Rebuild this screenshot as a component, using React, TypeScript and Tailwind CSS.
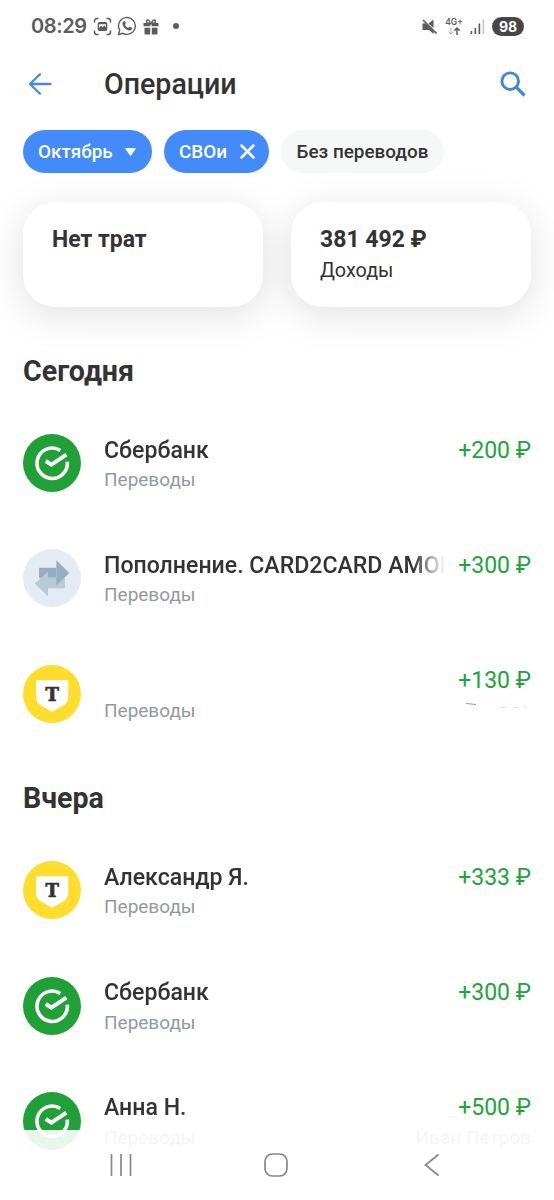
import React from 'react';

type Logo = 'sber' | 'transfer' | 'tbank';

interface Operation {
  id: number;
  logo: Logo;
  title: string;
  category: string;
  amount: string;
  note?: string;
}

const today: Operation[] = [
  { id: 1, logo: 'sber', title: 'Сбербанк', category: 'Переводы', amount: '+200 ₽' },
  { id: 2, logo: 'transfer', title: 'Пополнение. CARD2CARD AMOB', category: 'Переводы', amount: '+300 ₽' },
  { id: 3, logo: 'tbank', title: '', category: 'Переводы', amount: '+130 ₽' },
];

const yesterday: Operation[] = [
  { id: 4, logo: 'tbank', title: 'Александр Я.', category: 'Переводы', amount: '+333 ₽' },
  { id: 5, logo: 'sber', title: 'Сбербанк', category: 'Переводы', amount: '+300 ₽' },
  { id: 6, logo: 'sber', title: 'Анна Н.', category: 'Переводы', amount: '+500 ₽', note: 'Иван Петров' },
];

const StatusBar: React.FC = () => (
  <div className="flex h-[52px] items-center justify-between pl-[31px] pr-[30px] text-[#5c5c5c]">
    <div className="flex items-center">
      <span className="w-[56px] whitespace-nowrap font-['Inter',sans-serif] text-[20px] font-semibold leading-[24px] tracking-[-0.4px]">08:29</span>
      <svg className="ml-[6px] h-[19px] w-[19px]" viewBox="0 0 19 19" fill="none" stroke="currentColor" strokeWidth="1.5">
        <path d="M1.5 5.5V4a2.5 2.5 0 0 1 2.5-2.5h1.5M13.5 1.5H15A2.5 2.5 0 0 1 17.5 4v1.5M17.5 13.5V15a2.5 2.5 0 0 1-2.5 2.5h-1.5M5.5 17.5H4A2.5 2.5 0 0 1 1.5 15v-1.5" />
        <path fill="currentColor" fillRule="evenodd" stroke="none" d="M6.5 5h6a1.8 1.8 0 0 1 1.8 1.8v5.4a1.8 1.8 0 0 1-1.8 1.8h-6a1.8 1.8 0 0 1-1.8-1.8V6.8A1.8 1.8 0 0 1 6.5 5ZM6 11l2-2.2 1.6 1.4L11.3 8.5l1.7 1.7V7.3H6Z" />
      </svg>
      <svg className="ml-[5px] h-[20px] w-[20px]" viewBox="0 0 20 20" fill="none" stroke="currentColor" strokeWidth="1.4" strokeLinejoin="round">
        <path d="M1.5 18.5 2.7 14.2a8.4 8.4 0 1 1 3.2 3.1Z" />
        <path fill="currentColor" stroke="none" d="M6.7 5.2c.5-.4 1-.3 1.2.2l.8 1.8c.1.3 0 .6-.2.8l-.6.8c.8 1.5 1.8 2.5 3.4 3.2l.9-1c.2-.2.5-.3.8-.2l1.8.9c.4.2.4.4.3.8-.3 1.5-1.7 2.2-3 1.9-3.3-.7-6.1-3.5-6.6-6.5-.1-1.1.4-2 1.2-2.7Z" />
      </svg>
      <svg className="ml-[6px] h-[17px] w-[16px]" viewBox="0 0 16 17" fill="currentColor">
        <path d="M.5 5h2.8C2 3.2 3.4.7 5.5 1.5 6.9 2 7.5 3.5 8 4.7 8.5 3.5 9.1 2 10.5 1.5c2.1-.8 3.5 1.7 2.2 3.5h2.8v3.3H8.8L8 5.5l-.8 2.8H.5ZM1.5 9.7h5.7v6.8H2.5a1 1 0 0 1-1-1ZM8.8 9.7h5.7v5.8a1 1 0 0 1-1 1H8.8Z" />
        <path fill="#fff" d="M4.5 2.7c.9-.2 1.6.9 2 1.9H5.3c-1-.2-1.4-1.5-.8-1.9ZM11.5 2.7c-.9-.2-1.6.9-2 1.9h1.2c1-.2 1.4-1.5.8-1.9Z" />
      </svg>
      <span className="ml-[14px] h-[6px] w-[6px] rounded-full bg-[#5c5c5c]" />
    </div>

    <div className="flex items-center">
      <svg className="h-[17px] w-[17px]" viewBox="0 0 17 17" fill="currentColor">
        <path d="M2.5 5.5H6L13.5 13V16L9 12H2.5ZM8.5 5.5l5-4V10Z" />
        <path d="m3 2 13.5 13.5" fill="none" stroke="currentColor" strokeWidth="1.7" />
      </svg>
      <div className="ml-[7px] flex w-[20px] flex-col items-center">
        <span className="font-['Inter',sans-serif] text-[8.5px] font-semibold leading-[9px]">4G+</span>
        <svg className="h-[8px] w-[12px]" viewBox="0 0 12 8" fill="none" stroke="currentColor">
          <path d="M3 .5V7M.5 4.5 3 7l2.5-2.5" opacity=".45" />
          <path d="M9 8V1M6.3 3.7 9 1l2.7 2.7" strokeWidth="1.5" />
        </svg>
      </div>
      <svg className="ml-[6px] h-[15px] w-[15px]" viewBox="0 0 15 15" fill="currentColor">
        <path d="M.5 12h1.7v3H.5ZM4.5 9h1.7v6H4.5ZM8.5 4.5h1.7V15H8.5Z" />
        <path d="M12.5.5h1.7V15h-1.7Z" opacity=".35" />
      </svg>
      <span className="ml-[7px] flex h-[19px] w-[32px] items-center justify-center rounded-full bg-[#464646] font-['Inter',sans-serif] text-[14px] font-bold leading-[19px] text-white">98</span>
    </div>
  </div>
);

const OperationLogo: React.FC<{ logo: Logo }> = ({ logo }) => {
  if (logo === 'sber') {
    return (
      <svg className="h-[58px] w-[58px] shrink-0" viewBox="0 0 58 58" fill="none">
        <circle cx="29" cy="29" r="29" fill="#21a038" />
        <path d="M37.3 16.4A15.2 15.2 0 1 0 44.3 27.6" stroke="#fff" strokeWidth="3.6" />
        <path d="m22.7 27 5.7 3.7L43.4 20.6" stroke="#fff" strokeWidth="3.9" />
      </svg>
    );
  }
  if (logo === 'transfer') {
    return (
      <svg className="h-[58px] w-[58px] shrink-0" viewBox="0 0 58 58">
        <circle cx="29" cy="29" r="29" fill="#e5ebf5" />
        <path d="M16 18.8h17.3v10H16Z" fill="#95afc0" />
        <path d="M42 39.2H25v8L11.7 34.5 25 22.8v6h17Z" fill="#b8cad6" />
        <path d="M33.3 11.2 46.3 24l-13 12.2Z" fill="#95afc0" />
      </svg>
    );
  }
  return (
    <svg className="h-[58px] w-[58px] shrink-0" viewBox="0 0 58 58">
      <circle cx="29" cy="29" r="29" fill="#ffdd2d" />
      <path d="M13 15.3h32.3v16c0 4.8-2.3 7.8-6.3 10L29.2 46.7l-9.9-5.4c-4-2.2-6.3-5.2-6.3-10Z" fill="#fff" />
      <text x="29.2" y="36.2" textAnchor="middle" fontFamily="DejaVu Serif, serif" fontWeight="700" fontSize="18" fill="#333" stroke="#333" strokeWidth=".7">T</text>
    </svg>
  );
};

const OperationRow: React.FC<{ operation: Operation }> = ({ operation }) => (
  <li className="flex h-[58px] items-start">
    <OperationLogo logo={operation.logo} />
    <div className="ml-[23px] min-w-0 flex-1 pt-[1.5px]">
      <div className="h-[30px] overflow-hidden whitespace-nowrap text-[23.1px] font-medium leading-[30px] text-[#333] [mask-image:linear-gradient(to_right,black_calc(100%-32px),transparent)]">
        {operation.title}
      </div>
      <div className="mt-[1.5px] text-[19px] leading-[26px] text-[#9299a2]">{operation.category}</div>
    </div>
    <div className="ml-[8px] flex w-[78px] flex-col items-end whitespace-nowrap pt-[1.5px]">
      <span className="text-[23px] leading-[30px] text-[#20a53a]">{operation.amount}</span>
      {operation.note && <span className="mt-[1.5px] text-[19px] leading-[26px] text-[#9299a2]">{operation.note}</span>}
      {/* leftovers of the hidden sender name */}
      {!operation.title && (
        <svg className="mr-[3px] mt-[3.5px] h-[8px] w-[62px]" viewBox="0 0 62 8" fill="none" stroke="#999">
          <path d="M0 3.5 10 4.5" />
          <path d="M35 7.5h5M48 7.5h4M58 7h3" opacity=".3" />
        </svg>
      )}
    </div>
  </li>
);

const OperationGroup: React.FC<{ label: string; operations: Operation[] }> = ({ label, operations }) => (
  <section>
    <h2 className="h-[36px] text-[28.6px] font-bold leading-[36px] text-[#333]">{label}</h2>
    <ul className="mt-[45px] flex flex-col gap-[57.4px]">
      {operations.map((operation) => (
        <OperationRow key={operation.id} operation={operation} />
      ))}
    </ul>
  </section>
);

const App: React.FC = () => {
  return (
    <div className="relative h-[1200px] w-[554px] overflow-hidden bg-white font-['Roboto',sans-serif] text-[#333]">
      <StatusBar />

      <header className="flex h-[64px] items-center pl-[28px] pr-[28px]">
        <svg className="h-[24px] w-[24px]" viewBox="0 0 24 24" fill="none" stroke="#4689e3" strokeWidth="2.3" strokeLinecap="round" strokeLinejoin="round">
          <path d="M22.5 12H2M12 2.2 2 12l10 9.8" />
        </svg>
        <h1 className="ml-[52px] flex-1 text-[28.6px] font-medium leading-[36px]">Операции</h1>
        <svg className="h-[26px] w-[26px]" viewBox="0 0 26 26" fill="none" stroke="#4585d8" strokeWidth="2.9">
          <circle cx="10.2" cy="10.2" r="8.3" />
          <path d="m16.2 16.2 8.3 8.3" strokeWidth="3.2" />
        </svg>
      </header>

      {/* Filters */}
      <div className="mt-[14px] flex h-[43px] pl-[23px] text-[18.9px] font-medium leading-[43px]">
        <button className="flex w-[129px] items-center whitespace-nowrap rounded-full bg-[#428bf9] pl-[15px] text-white">
          <span className="w-[87px] text-left">Октябрь</span>
          <svg className="h-[8px] w-[11px]" viewBox="0 0 11 8" fill="#fff">
            <path d="M1 0h9q1.3 0 .6 1L6.2 7.3q-.7.9-1.4 0L.4 1Q-.3 0 1 0Z" />
          </svg>
        </button>
        <button className="ml-[12px] flex w-[105px] items-center whitespace-nowrap rounded-full bg-[#428bf9] pl-[15px] text-white">
          <span className="w-[61px] text-left">СВОи</span>
          <svg className="h-[15px] w-[15px]" viewBox="0 0 15 15" stroke="#fff" strokeWidth="2.5" strokeLinecap="round">
            <path d="m1.5 1.5 12 12M13.5 1.5l-12 12" />
          </svg>
        </button>
        <button className="ml-[12px] flex w-[163px] items-center justify-center whitespace-nowrap rounded-full bg-[#f6f8f8]">
          Без переводов
        </button>
      </div>

      {/* Month totals */}
      <div className="mt-[29px] flex gap-[28px] px-[23px]">
        <div className="h-[105px] w-[240px] rounded-[32px] bg-white pl-[29px] pt-[23px] shadow-[0_8px_42px_rgba(0,0,0,0.12)]">
          <div className="text-[23px] font-bold leading-[30px]">Нет трат</div>
        </div>
        <div className="h-[105px] w-[240px] rounded-[32px] bg-white pl-[29px] pt-[23px] shadow-[0_8px_42px_rgba(0,0,0,0.12)]">
          <div className="text-[23px] font-bold leading-[30px]">381 492 ₽</div>
          <div className="text-[19.8px] leading-[31px]">Доходы</div>
        </div>
      </div>

      <main className="mt-[46px] flex flex-col gap-[57.4px] px-[23px]">
        <OperationGroup label="Сегодня" operations={today} />
        <OperationGroup label="Вчера" operations={yesterday} />
      </main>

      {/* System navigation over the list */}
      <nav className="absolute inset-x-0 bottom-0 flex h-[70px] items-center bg-white/90 pl-[110px]">
        <svg className="h-[22px] w-[22px]" viewBox="0 0 22 22" stroke="#888" strokeWidth="1.7">
          <path d="M1.5 0v22M11 0v22M20.5 0v22" />
        </svg>
        <svg className="ml-[132px] h-[24px] w-[24px]" viewBox="0 0 24 24" fill="none" stroke="#888" strokeWidth="1.7">
          <rect x="1" y="1" width="22" height="22" rx="7.5" />
        </svg>
        <svg className="ml-[136px] h-[24px] w-[16px]" viewBox="0 0 16 24" fill="none" stroke="#888" strokeWidth="1.7">
          <path d="M14.5 1.5 1.5 12l13 10.5" />
        </svg>
      </nav>
    </div>
  );
};

export default App;
